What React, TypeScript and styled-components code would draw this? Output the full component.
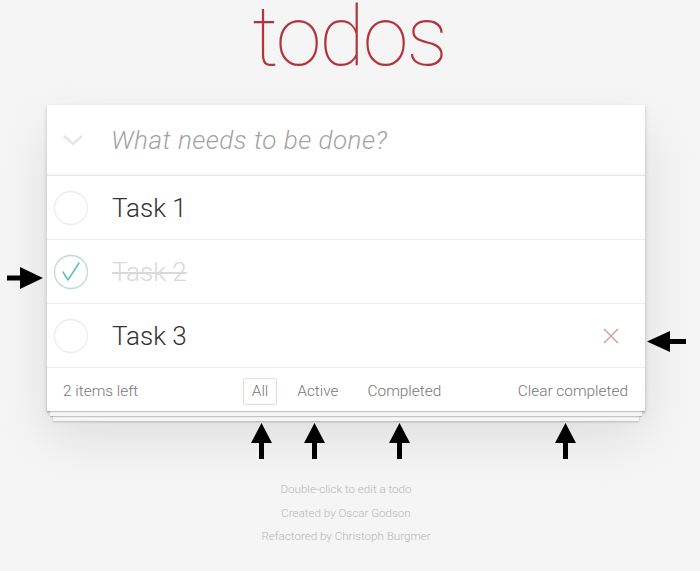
import React from "react";
import styled, { createGlobalStyle } from "styled-components";

const GlobalStyle = createGlobalStyle`
  html, body { margin: 0; padding: 0; background: #f5f5f5; }
  body {
    font-family: "Helvetica Neue", Roboto, "Liberation Sans", Arial, sans-serif;
    font-weight: 300;
    color: #4d4d4d;
    -webkit-font-smoothing: antialiased;
  }
  * { box-sizing: border-box; }
`;

const Page = styled.div`
  position: relative;
  width: 700px;
  min-height: 571px;
  padding-left: 47px;
`;

const Column = styled.div`
  width: 598px;
`;

const Title = styled.h1`
  margin: 0;
  height: 105px;
  text-align: center;
  font-family: "Helvetica Neue", Roboto, sans-serif;
  font-weight: 100;
  font-size: 83px;
  line-height: 74px;
  color: #b3353b;
  letter-spacing: -2px;
  padding-left: 6px;
`;

const Panel = styled.section`
  position: relative;
  background: #fff;
  box-shadow: 0 2px 4px 0 rgba(0, 0, 0, 0.2), 0 25px 50px 0 rgba(0, 0, 0, 0.1);
`;

const Header = styled.div`
  display: flex;
  align-items: center;
  height: 71px;
  border-bottom: 1px solid #e6e6e6;
  box-shadow: inset 0 -2px 1px rgba(0, 0, 0, 0.03);
`;

const ToggleAll = styled.div`
  width: 64px;
  display: flex;
  padding-left: 15px;
  svg { display: block; }
`;

const Placeholder = styled.span`
  font-size: 26px;
  letter-spacing: 0.5px;
  font-style: italic;
  font-weight: 300;
  color: #a3a3a3;
`;

const Row = styled.div`
  display: flex;
  align-items: center;
  height: 64px;
  border-bottom: 1px solid #ededed;
  padding-right: 26px;
`;

const CheckCell = styled.div`
  width: 65px;
  display: flex;
  padding-left: 6px;
  svg { display: block; }
`;

const Label = styled.span<{ $done?: boolean }>`
  flex: 1;
  font-size: 26px;
  font-weight: 300;
  color: ${(p) => (p.$done ? "#d9d9d9" : "#333")};
  text-decoration: ${(p) => (p.$done ? "line-through" : "none")};
`;

const Destroy = styled.div`
  display: flex;
  svg { display: block; }
`;

const Footer = styled.footer`
  position: relative;
  display: grid;
  grid-template-columns: 1fr auto 1fr;
  align-items: center;
  height: 43px;
  padding: 3px 17px 0 16px;
  font-size: 15.4px;
  color: #777;
  &::before {
    content: "";
    position: absolute;
    left: 0;
    right: 0;
    bottom: 0;
    height: 43px;
    box-shadow: 0 1px 1px rgba(0, 0, 0, 0.2), 0 8px 0 -3px #f6f6f6,
      0 9px 1px -3px rgba(0, 0, 0, 0.2), 0 16px 0 -6px #f6f6f6,
      0 17px 2px -6px rgba(0, 0, 0, 0.2);
    pointer-events: none;
  }
`;

const Count = styled.span`
  position: relative;
  justify-self: start;
`;

const Filters = styled.div`
  position: relative;
  display: flex;
  gap: 11px;
  margin-left: 2px;
`;

const Filter = styled.span<{ $selected?: boolean }>`
  display: inline-block;
  padding: 3px 8px;
  line-height: 19px;
  border: 1px solid ${(p) => (p.$selected ? "rgba(175, 47, 47, 0.2)" : "transparent")};
  border-radius: 3px;
  color: #777;
`;

const Clear = styled.span`
  position: relative;
  justify-self: end;
`;

const Info = styled.div`
  margin-top: 67px;
  text-align: center;
  font-size: 11.6px;
  color: #b5b5b5;
  p {
    margin: 0;
    line-height: 23.5px;
  }
`;

const ArrowBox = styled.div<{ $left: number; $top: number }>`
  position: absolute;
  left: ${(p) => p.$left}px;
  top: ${(p) => p.$top}px;
  svg { display: block; }
`;

type Dir = "right" | "left" | "up";

function Arrow({ left, top, dir, len, head, headLen, shaft }: { left: number; top: number; dir: Dir; len: number; head: number; headLen: number; shaft: number }) {
  const h = head / 2;
  const t = shaft / 2;
  let pts: number[][] = [
    [0, h - t],
    [len - headLen, h - t],
    [len - headLen, 0],
    [len, h],
    [len - headLen, head],
    [len - headLen, h + t],
    [0, h + t],
  ];
  let w = len;
  let hh = head;
  if (dir === "left") pts = pts.map(([x, y]) => [len - x, y]);
  if (dir === "up") {
    pts = pts.map(([x, y]) => [y, len - x]);
    w = head;
    hh = len;
  }
  return (
    <ArrowBox $left={left} $top={top}>
      <svg width={w} height={hh} viewBox={`0 0 ${w} ${hh}`}>
        <polygon points={pts.map((p) => p.join(",")).join(" ")} fill="#000" />
      </svg>
    </ArrowBox>
  );
}

function Circle({ done }: { done?: boolean }) {
  return (
    <svg width="36" height="36" viewBox="0 0 36 36">
      <circle cx="18" cy="18" r="16.5" fill="none" stroke={done ? "#bddad5" : "#ededed"} strokeWidth="1.3" />
      {done && (
        <polyline points="10,18 15,26 26,9" fill="none" stroke="#5dc2af" strokeWidth="1.5" strokeLinecap="round" strokeLinejoin="round" />
      )}
    </svg>
  );
}

const tasks = [
  { text: "Task 1", done: false },
  { text: "Task 2", done: true },
  { text: "Task 3", done: false, hover: true },
];

export default function App() {
  return (
    <>
      <GlobalStyle />
      <Page>
        <Column>
          <Title>todos</Title>
          <Panel>
            <Header>
              <ToggleAll>
                <svg width="22" height="12" viewBox="0 0 22 12">
                  <polyline points="2,2 11,10 20,2" fill="none" stroke="#e6e6e6" strokeWidth="2.6" />
                </svg>
              </ToggleAll>
              <Placeholder>What needs to be done?</Placeholder>
            </Header>
            {tasks.map((t) => (
              <Row key={t.text}>
                <CheckCell>
                  <Circle done={t.done} />
                </CheckCell>
                <Label $done={t.done}>{t.text}</Label>
                {t.hover && (
                  <Destroy>
                    <svg width="16" height="16" viewBox="0 0 16 16">
                      <path d="M1,1 L15,15 M15,1 L1,15" stroke="#cc9a9a" strokeWidth="1.3" fill="none" />
                    </svg>
                  </Destroy>
                )}
              </Row>
            ))}
            <Footer>
              <Count>2 items left</Count>
              <Filters>
                <Filter $selected>All</Filter>
                <Filter>Active</Filter>
                <Filter>Completed</Filter>
              </Filters>
              <Clear>Clear completed</Clear>
            </Footer>
          </Panel>
          <Info>
            <p>Double-click to edit a todo</p>
            <p>Created by Oscar Godson</p>
            <p>Refactored by Christoph Burgmer</p>
          </Info>
        </Column>
        <Arrow dir="right" left={7} top={267} len={36} head={22} headLen={23} shaft={5} />
        <Arrow dir="left" left={647} top={331} len={39} head={21} headLen={23} shaft={5} />
        <Arrow dir="up" left={251} top={423} len={36} head={21} headLen={20} shaft={5} />
        <Arrow dir="up" left={304} top={423} len={36} head={21} headLen={20} shaft={5} />
        <Arrow dir="up" left={389} top={423} len={36} head={21} headLen={20} shaft={5} />
        <Arrow dir="up" left={555} top={423} len={36} head={21} headLen={20} shaft={5} />
      </Page>
    </>
  );
}
